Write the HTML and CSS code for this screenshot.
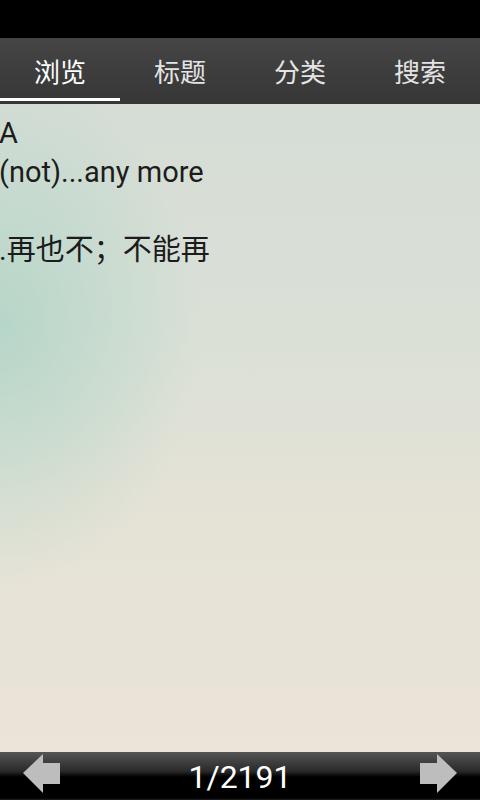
FILE: index.html
```html
<!DOCTYPE html>
<html>
<head>
<meta charset="utf-8">
<link rel="stylesheet" href="styles.css">
</head>
<body>
<div class="status"></div>
<div class="tabs">
  <div class="tab active">浏览</div>
  <div class="tab">标题</div>
  <div class="tab">分类</div>
  <div class="tab">搜索</div>
</div>
<div class="content">
  <div class="line">A</div>
  <div class="line">(not)...any more</div>
  <div class="line">&nbsp;</div>
  <div class="line">.再也不；不能再</div>
</div>
<div class="bottom">
  <svg class="arrow" width="60" height="48" viewBox="0 0 60 48"><polygon points="23,21 43,2 43,11 60,11 60,32 43,32 43,41" fill="#bdbdbd"/></svg>
  <div class="page">1/2191</div>
  <svg class="arrow" width="60" height="48" viewBox="0 0 60 48"><polygon points="37,21 17,2 17,11 0,11 0,32 17,32 17,41" fill="#bdbdbd"/></svg>
</div>
</body>
</html>
```
FILE: styles.css
```css
html, body {
  margin: 0;
  padding: 0;
}
body {
  width: 480px;
  height: 800px;
  display: flex;
  flex-direction: column;
  font-family: Roboto, "Noto Sans CJK SC", sans-serif;
  background: #000;
  overflow: hidden;
}
.status {
  height: 38px;
  background: #000;
  flex: none;
}
.tabs {
  height: 66px;
  flex: none;
  display: flex;
  background: linear-gradient(#454545, #363636);
}
.tab {
  flex: 1;
  display: flex;
  align-items: center;
  justify-content: center;
  font-size: 26px;
  color: #e4e4e4;
  padding-top: 4px;
  margin-bottom: 3px;
  border-bottom: 3px solid transparent;
  box-sizing: border-box;
}
.tab.active {
  color: #fff;
  border-bottom-color: #fff;
}
.content {
  flex: 1;
  padding: 10px 0 0 0;
  background:
    radial-gradient(ellipse 200px 260px at 0 220px, rgba(178,213,199,0.9), rgba(178,213,199,0) 100%),
    linear-gradient(180deg, #d6ddd6 0%, #dae0d6 35%, #e4e2d6 60%, #ebe4d8 100%);
  color: #1c1c1c;
  font-size: 29px;
  line-height: 39px;
}
.line {
  white-space: nowrap;
  margin-left: -1px;
}
.bottom {
  height: 48px;
  flex: none;
  display: flex;
  align-items: center;
  justify-content: space-between;
  background: linear-gradient(#555 0%, #2a2a2a 40%, #000 52%, #000 96%, #222 100%);
}
.arrow {
  display: block;
}
.page {
  color: #fff;
  font-size: 32px;
  padding-top: 2px;
}
```
